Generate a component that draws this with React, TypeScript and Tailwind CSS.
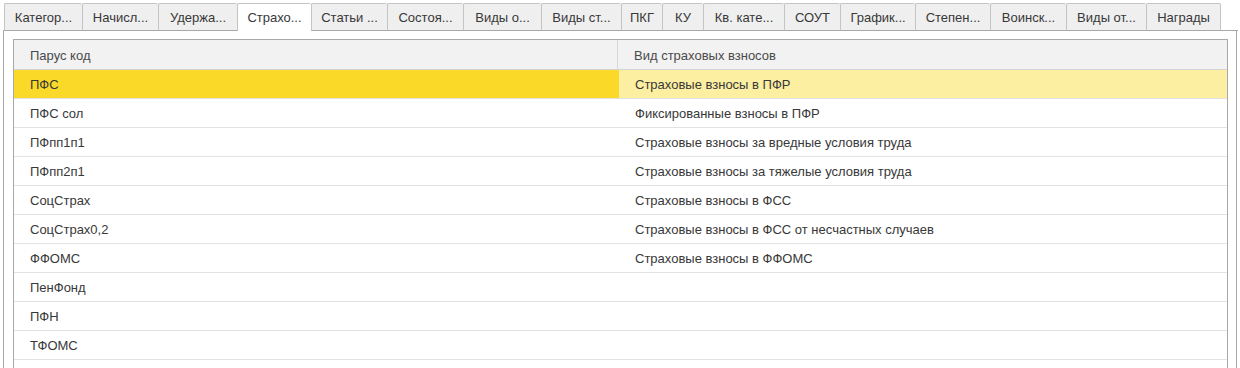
import React from "react";

const tabs = [
  { label: "Категор...", w: 78 },
  { label: "Начисл...", w: 76 },
  { label: "Удержа...", w: 79 },
  { label: "Страхо...", w: 74, active: true },
  { label: "Статьи ...", w: 76 },
  { label: "Состоя...", w: 76 },
  { label: "Виды о...", w: 78 },
  { label: "Виды ст...", w: 80 },
  { label: "ПКГ", w: 41 },
  { label: "КУ", w: 41 },
  { label: "Кв. кате...", w: 81 },
  { label: "СОУТ", w: 56 },
  { label: "График...", w: 75 },
  { label: "Степен...", w: 75 },
  { label: "Воинск...", w: 76 },
  { label: "Виды от...", w: 80 },
  { label: "Награды", w: 75 },
];

const rows: [string, string][] = [
  ["ПФС", "Страховые взносы в ПФР"],
  ["ПФС сол", "Фиксированные взносы в ПФР"],
  ["ПФпп1п1", "Страховые взносы за вредные условия труда"],
  ["ПФпп2п1", "Страховые взносы за тяжелые условия труда"],
  ["СоцСтрах", "Страховые взносы в ФСС"],
  ["СоцСтрах0,2", "Страховые взносы в ФСС от несчастных случаев"],
  ["ФФОМС", "Страховые взносы в ФФОМС"],
  ["ПенФонд", ""],
  ["ПФН", ""],
  ["ТФОМС", ""],
  ["", ""],
];

export default function App() {
  return (
    <div className="h-screen overflow-hidden bg-white pt-[3px] font-['Liberation_Sans',Arial,sans-serif] text-[13px] text-[#383838]">
      {/* вкладки */}
      <div className="flex pl-[3px] pr-[2px]">
        <div className="w-px border-b border-[#a8a8a8]" />
        {tabs.map((t, i) => (
          <div
            key={i}
            style={{ width: t.w }}
            className={`flex h-[28px] shrink-0 items-center justify-center rounded-t-[2px] border-t border-l border-[#c4c4c4] ${
              i === tabs.length - 1 ? "border-r" : ""
            } ${t.active ? "bg-white" : "border-b border-b-[#a8a8a8] bg-[#efefef]"}`}
          >
            <span className="whitespace-nowrap pt-px">{t.label}</span>
          </div>
        ))}
        <div className="flex-1 border-b border-[#a8a8a8]" />
      </div>

      {/* панель */}
      <div className="mx-[3px] h-full border-x border-[#a8a8a8] pt-[8px] pl-[9px] pr-[8px]">
        <div className="border-x border-t border-[#a9a9a9]">
          <div className="flex h-[30px] border-b border-[#d4d4d4] bg-[#f2f2f2] text-[#4a4a4a]">
            <div className="flex w-[604px] items-center border-r border-[#d8d8d8] pl-[16px] pt-[2px]">Парус код</div>
            <div className="flex flex-1 items-center pl-[16px] pt-[2px]">Вид страховых взносов</div>
          </div>
          {rows.map(([code, name], i) => (
            <div key={i} className="flex h-[29px] border-b border-[#e2e2e2]">
              <div
                className={`flex w-[605px] items-center pl-[16px] pt-[2px] ${i === 0 ? "bg-[#fad928]" : ""}`}
              >
                {code}
              </div>
              <div className={`flex flex-1 items-center pl-[16px] pt-[2px] ${i === 0 ? "bg-[#fcefa2]" : ""}`}>
                {name}
              </div>
            </div>
          ))}
        </div>
      </div>
    </div>
  );
}
